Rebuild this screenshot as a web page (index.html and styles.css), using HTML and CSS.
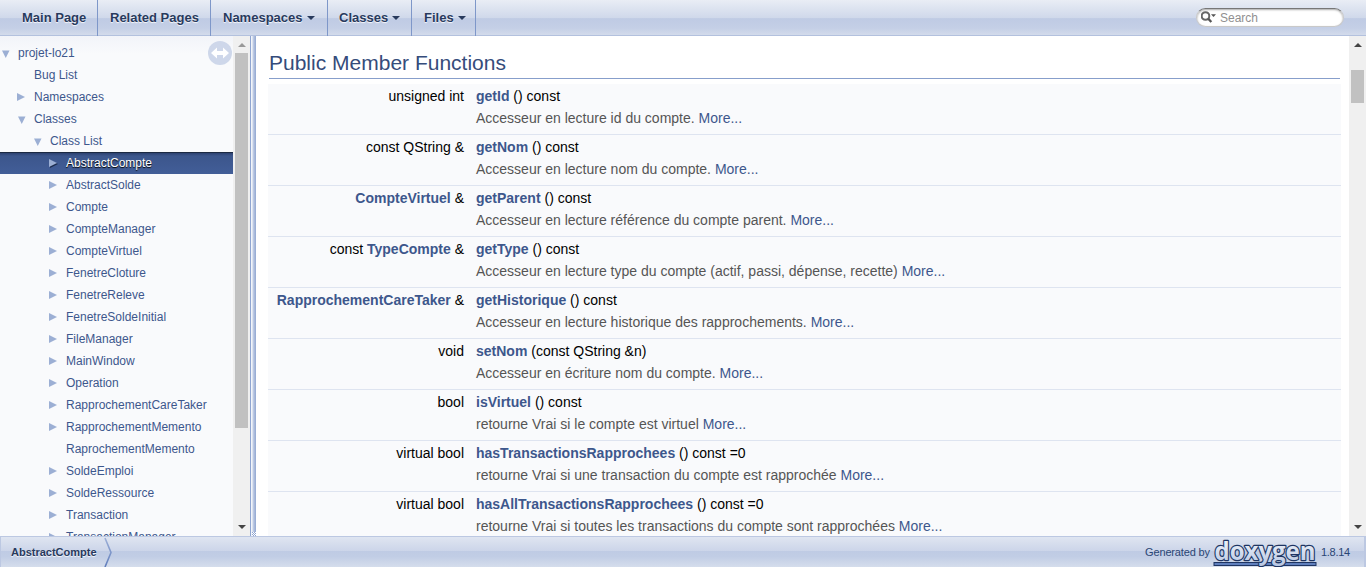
FILE: index.html
```
<!DOCTYPE html>
<html lang="fr">
<head>
<meta charset="utf-8">
<title>projet-lo21: AbstractCompte</title>
<link rel="stylesheet" href="styles.css">
</head>
<body>
<svg width="0" height="0" class="defs">
  <defs>
    <symbol id="open" viewBox="0 0 8 8"><path d="M0 0.5h7.500L3.750 8z" fill="currentColor"/></symbol>
    <symbol id="closed" viewBox="0 0 8 8"><path d="M0 0L8 4L0 8z" fill="currentColor"/></symbol>
    <symbol id="up" viewBox="0 0 8 4"><path d="M0 4L4 0L8 4z" fill="currentColor"/></symbol>
    <symbol id="down" viewBox="0 0 8 4"><path d="M0 0L4 4L8 0z" fill="currentColor"/></symbol>
  </defs>
</svg>
<header class="menu">
  <a class="tab main">Main Page</a>
  <a class="tab related">Related Pages</a>
  <a class="tab namespaces">Namespaces<svg class="caret"><use href="#down"/></svg></a>
  <a class="tab classes">Classes<svg class="caret"><use href="#down"/></svg></a>
  <a class="tab files">Files<svg class="caret"><use href="#down"/></svg></a>
  <div class="search">
    <svg class="glass" width="16" height="13" viewBox="0 0 16 13"><circle cx="4.500" cy="5" r="3.800" fill="none" stroke="#666" stroke-width="2"/><path d="M7.300 7.800L10.300 11" stroke="#555" stroke-width="2.400"/><path d="M10 3.200h5L12.500 6z" fill="#555"/></svg>
    <span>Search</span>
  </div>
</header>
<div class="middle">
  <nav class="side">
    <div class="tree">
      <div class="node l0"><svg class="arrow"><use href="#open"/></svg>projet-lo21</div>
      <div class="node l1"><i class="arrow"></i>Bug List</div>
      <div class="node l1"><svg class="arrow shut"><use href="#closed"/></svg>Namespaces</div>
      <div class="node l1"><svg class="arrow"><use href="#open"/></svg>Classes</div>
      <div class="node l2"><svg class="arrow"><use href="#open"/></svg>Class List</div>
      <div class="node l3 selected"><svg class="arrow"><use href="#closed"/></svg>AbstractCompte</div>
      <div class="node l3"><svg class="arrow"><use href="#closed"/></svg>AbstractSolde</div>
      <div class="node l3"><svg class="arrow"><use href="#closed"/></svg>Compte</div>
      <div class="node l3"><svg class="arrow"><use href="#closed"/></svg>CompteManager</div>
      <div class="node l3"><svg class="arrow"><use href="#closed"/></svg>CompteVirtuel</div>
      <div class="node l3"><svg class="arrow"><use href="#closed"/></svg>FenetreCloture</div>
      <div class="node l3"><svg class="arrow"><use href="#closed"/></svg>FenetreReleve</div>
      <div class="node l3"><svg class="arrow"><use href="#closed"/></svg>FenetreSoldeInitial</div>
      <div class="node l3"><svg class="arrow"><use href="#closed"/></svg>FileManager</div>
      <div class="node l3"><svg class="arrow"><use href="#closed"/></svg>MainWindow</div>
      <div class="node l3"><svg class="arrow"><use href="#closed"/></svg>Operation</div>
      <div class="node l3"><svg class="arrow"><use href="#closed"/></svg>RapprochementCareTaker</div>
      <div class="node l3"><svg class="arrow"><use href="#closed"/></svg>RapprochementMemento</div>
      <div class="node l3"><i class="arrow"></i>RaprochementMemento</div>
      <div class="node l3"><svg class="arrow"><use href="#closed"/></svg>SoldeEmploi</div>
      <div class="node l3"><svg class="arrow"><use href="#closed"/></svg>SoldeRessource</div>
      <div class="node l3"><svg class="arrow"><use href="#closed"/></svg>Transaction</div>
      <div class="node l3"><svg class="arrow"><use href="#closed"/></svg>TransactionManager</div>
    </div>
    <svg class="sync" width="24" height="24" viewBox="0 0 24 24"><circle cx="12" cy="12" r="12" fill="#ced7ea"/><path d="M3 12L9 6.500V10H15V6.500L21 12L15 17.500V14H9V17.500z" fill="#fff"/></svg>
    <div class="scrollbar">
      <svg class="btn dim"><use href="#up"/></svg>
      <div class="thumb tall"></div>
      <svg class="btn"><use href="#down"/></svg>
    </div>
  </nav>
  <div class="splitter"><i class="grip"></i></div>
  <main class="doc">
    <div class="contents">
      <h2>Public Member Functions</h2>
      <div class="members">
        <div class="member"><div class="type">unsigned int</div><div class="sig"><b>getId</b> () const</div><div class="desc">Accesseur en lecture id du compte. <a>More...</a></div></div>
        <div class="member"><div class="type">const QString &amp;</div><div class="sig"><b>getNom</b> () const</div><div class="desc">Accesseur en lecture nom du compte. <a>More...</a></div></div>
        <div class="member"><div class="type"><b>CompteVirtuel</b> &amp;</div><div class="sig"><b>getParent</b> () const</div><div class="desc">Accesseur en lecture référence du compte parent. <a>More...</a></div></div>
        <div class="member"><div class="type">const <b>TypeCompte</b> &amp;</div><div class="sig"><b>getType</b> () const</div><div class="desc">Accesseur en lecture type du compte (actif, passi, dépense, recette) <a>More...</a></div></div>
        <div class="member"><div class="type"><b>RapprochementCareTaker</b> &amp;</div><div class="sig"><b>getHistorique</b> () const</div><div class="desc">Accesseur en lecture historique des rapprochements. <a>More...</a></div></div>
        <div class="member"><div class="type">void</div><div class="sig"><b>setNom</b> (const QString &amp;n)</div><div class="desc">Accesseur en écriture nom du compte. <a>More...</a></div></div>
        <div class="member"><div class="type">bool</div><div class="sig"><b>isVirtuel</b> () const</div><div class="desc">retourne Vrai si le compte est virtuel <a>More...</a></div></div>
        <div class="member"><div class="type">virtual bool</div><div class="sig"><b>hasTransactionsRapprochees</b> () const =0</div><div class="desc">retourne Vrai si une transaction du compte est rapprochée <a>More...</a></div></div>
        <div class="member"><div class="type">virtual bool</div><div class="sig"><b>hasAllTransactionsRapprochees</b> () const =0</div><div class="desc">retourne Vrai si toutes les transactions du compte sont rapprochées <a>More...</a></div></div>
      </div>
    </div>
    <div class="scrollbar">
      <svg class="btn"><use href="#up"/></svg>
      <div class="thumb short"></div>
      <svg class="btn"><use href="#down"/></svg>
    </div>
  </main>
</div>
<footer class="path">
  <b class="crumb">AbstractCompte</b>
  <svg class="chevron" width="9" height="30" viewBox="0 0 9 30"><defs><linearGradient id="edge" x1="0" y1="0" x2="0" y2="1"><stop offset="0" stop-color="#9db0d8"/><stop offset="1" stop-color="#5f7dbb"/></linearGradient></defs><path d="M1 1L7 15.500L1 30" fill="none" stroke="url(#edge)" stroke-width="1.600"/></svg>
  <div class="generated">
    <span class="by">Generated by</span>
    <svg class="logo" width="104" height="28" viewBox="0 0 104 28">
      <defs><linearGradient id="fill" x1="0" y1="0" x2="0" y2="1"><stop offset="0" stop-color="#fff"/><stop offset="1" stop-color="#b4c4e2"/></linearGradient></defs>
      <rect x="1" y="23.500" width="102" height="3" fill="#5f7fbd" stroke="#1f3563"/>
      <text x="1.500" y="21" textLength="101" lengthAdjust="spacingAndGlyphs" class="word">doxygen</text>
    </svg>
    <span class="version">1.8.14</span>
  </div>
</footer>
</body>
</html>
```
FILE: styles.css
```
* { box-sizing: border-box; }
body {
  margin: 0; height: 567px; overflow: hidden;
  display: flex; flex-direction: column;
  font: 14px/22px "Liberation Sans", Arial, sans-serif;
  background: #fff; color: #000;
}
.defs { position: absolute; }
.menu {
  height: 36px; flex: none; display: flex; padding-right: 22px;
  border-bottom: 1px solid #b3c1de;
  background: linear-gradient(#e9edf5 0, #cfd8ea 52%, #bfcbe4 53%, #c4cfe6 80%, #d3dbeb 100%);
}
.tab {
  display: flex; align-items: center; height: 36px;
  border-right: 1px solid #7e97c9;
  font-weight: bold; font-size: 13px; line-height: 36px;
  color: #283a5d; text-shadow: 0 1px 1px rgba(255,255,255,.9);
}
.main { width: 98px; padding-left: 22px; }
.related { width: 113px; padding-left: 12px; }
.namespaces { width: 117px; padding-left: 12px; }
.classes { width: 84px; padding-left: 11px; }
.files { width: 64px; padding-left: 12px; }
.caret { width: 8px; height: 4px; margin-left: 4px; }
.search {
  margin: 8px 0 0 auto; width: 148px; height: 19px; padding-left: 4px;
  display: flex; align-items: center; gap: 3px;
  border-radius: 10px; border: 1px solid #c9c9c9; border-top: 1px solid #777;
  background: #fff; box-shadow: inset 0 1px 2px #aaa;
  font-size: 12px; line-height: 17px; color: #909090;
}
.search span { padding-top: 1px; }
.glass { flex: none; }
.middle { height: 500px; flex: none; display: flex; }
.side { position: relative; width: 250px; display: flex; background: #f9fafc; }
.tree {
  width: 233px; height: 500px; padding-top: 6px; overflow: hidden;
  background: linear-gradient(#f2f4f9, #f9fafc 18px);
}
.node {
  height: 22px; display: flex; align-items: center; gap: 8px;
  font-size: 12px; line-height: 22px; color: #3d578c; white-space: nowrap;
}
.l0 { padding-left: 2px; }
.l1 { padding-left: 18px; }
.l2 { padding-left: 34px; }
.l3 { padding-left: 49px; }
.l3 .arrow { margin-right: 1px; }
.l0 .arrow, .l1 .arrow, .l2 .arrow { margin-top: 1px; }
.l1 .shut { margin: -1px 1px 0 -1px; }
.arrow { width: 8px; height: 8px; color: #9cafd4; flex: none; }
.selected {
  color: #fff; text-shadow: 0 1px 1px #000;
  background: linear-gradient(#1b2942 1px, #2c4170 1px, #3c568c 4px, #425e98);
}
.selected .arrow { filter: drop-shadow(1px 1px 0 #1c2c4e); }
.sync { position: absolute; left: 208px; top: 5px; }
.scrollbar {
  width: 17px; height: 500px; padding: 7px 2px; flex: none;
  display: flex; flex-direction: column; background: #f0f0f0;
}
.btn { width: 8px; height: 4px; margin: 0 auto; color: #444; flex: none; }
.dim { color: #999; }
.thumb { background: #c1c1c1; }
.tall { height: 375px; margin: 6px 0 97px; }
.short { height: 33px; margin: 23px 0 422px; }
.splitter {
  width: 6px; flex: none; display: flex; align-items: flex-end;
  background: linear-gradient(90deg, #8fa5d1 1px, #f2f5fa 1px 2px, #dce3f0 2px 3px, #bcc9e3 3px 4px, #a9badb 4px 5px, #9aaed5 5px);
}
.grip { width: 4px; height: 4px; margin-left: 2px; background: repeating-conic-gradient(#fff 0 25%, #8fa5d1 0 50%) 0 0 / 2px 2px; }
.doc { flex: 1; display: flex; justify-content: space-between; overflow: hidden; }
.contents { width: 1085px; padding: 12px 0 0 12px; }
h2 {
  width: 1071px; height: 31px; margin: 0 0 5px 1px; padding-top: 4px;
  font-size: 21px; line-height: 22px; font-weight: normal;
  color: #354c7b; border-bottom: 1px solid #879ecb;
}
.members { width: 1073px; }
.member {
  height: 51px; padding-top: 1px; display: grid;
  grid-template-columns: 196px 1fr; grid-template-rows: 22px 22px; column-gap: 12px;
  background: #f9fafc; border-bottom: 1px solid #dee4f0; white-space: nowrap;
}
.type { text-align: right; }
.member b { color: #3d578c; }
.desc { grid-column: 2; color: #555; }
.desc a { color: #3d578c; }
.path {
  height: 31px; flex: none; display: flex; align-items: center;
  padding-left: 10px; padding-right: 14px;
  border: 1px solid #bcc8e2; border-right-width: 2px; border-bottom: 0;
  background: linear-gradient(#dfe5f1 0, #ccd5e9 46%, #bfcbe4 47%, #c1cde5 65%, #d5ddec 100%);
}
.crumb { font-size: 11px; color: #283a5d; text-shadow: 0 1px 1px rgba(255,255,255,.9); }
.chevron { margin-left: 7px; }
.generated { margin-left: auto; display: flex; align-items: center; font-size: 11px; color: #2a4574; }
.by { letter-spacing: -0.15px; }
.version { letter-spacing: -0.25px; }
.logo { margin: 1px 4px 0 3px; overflow: visible; }
.word {
  font: bold 25px "Open Sans", sans-serif;
  fill: url(#fill); stroke: #1f3563; stroke-width: 2.4px; paint-order: stroke; stroke-linejoin: round;
}
```
